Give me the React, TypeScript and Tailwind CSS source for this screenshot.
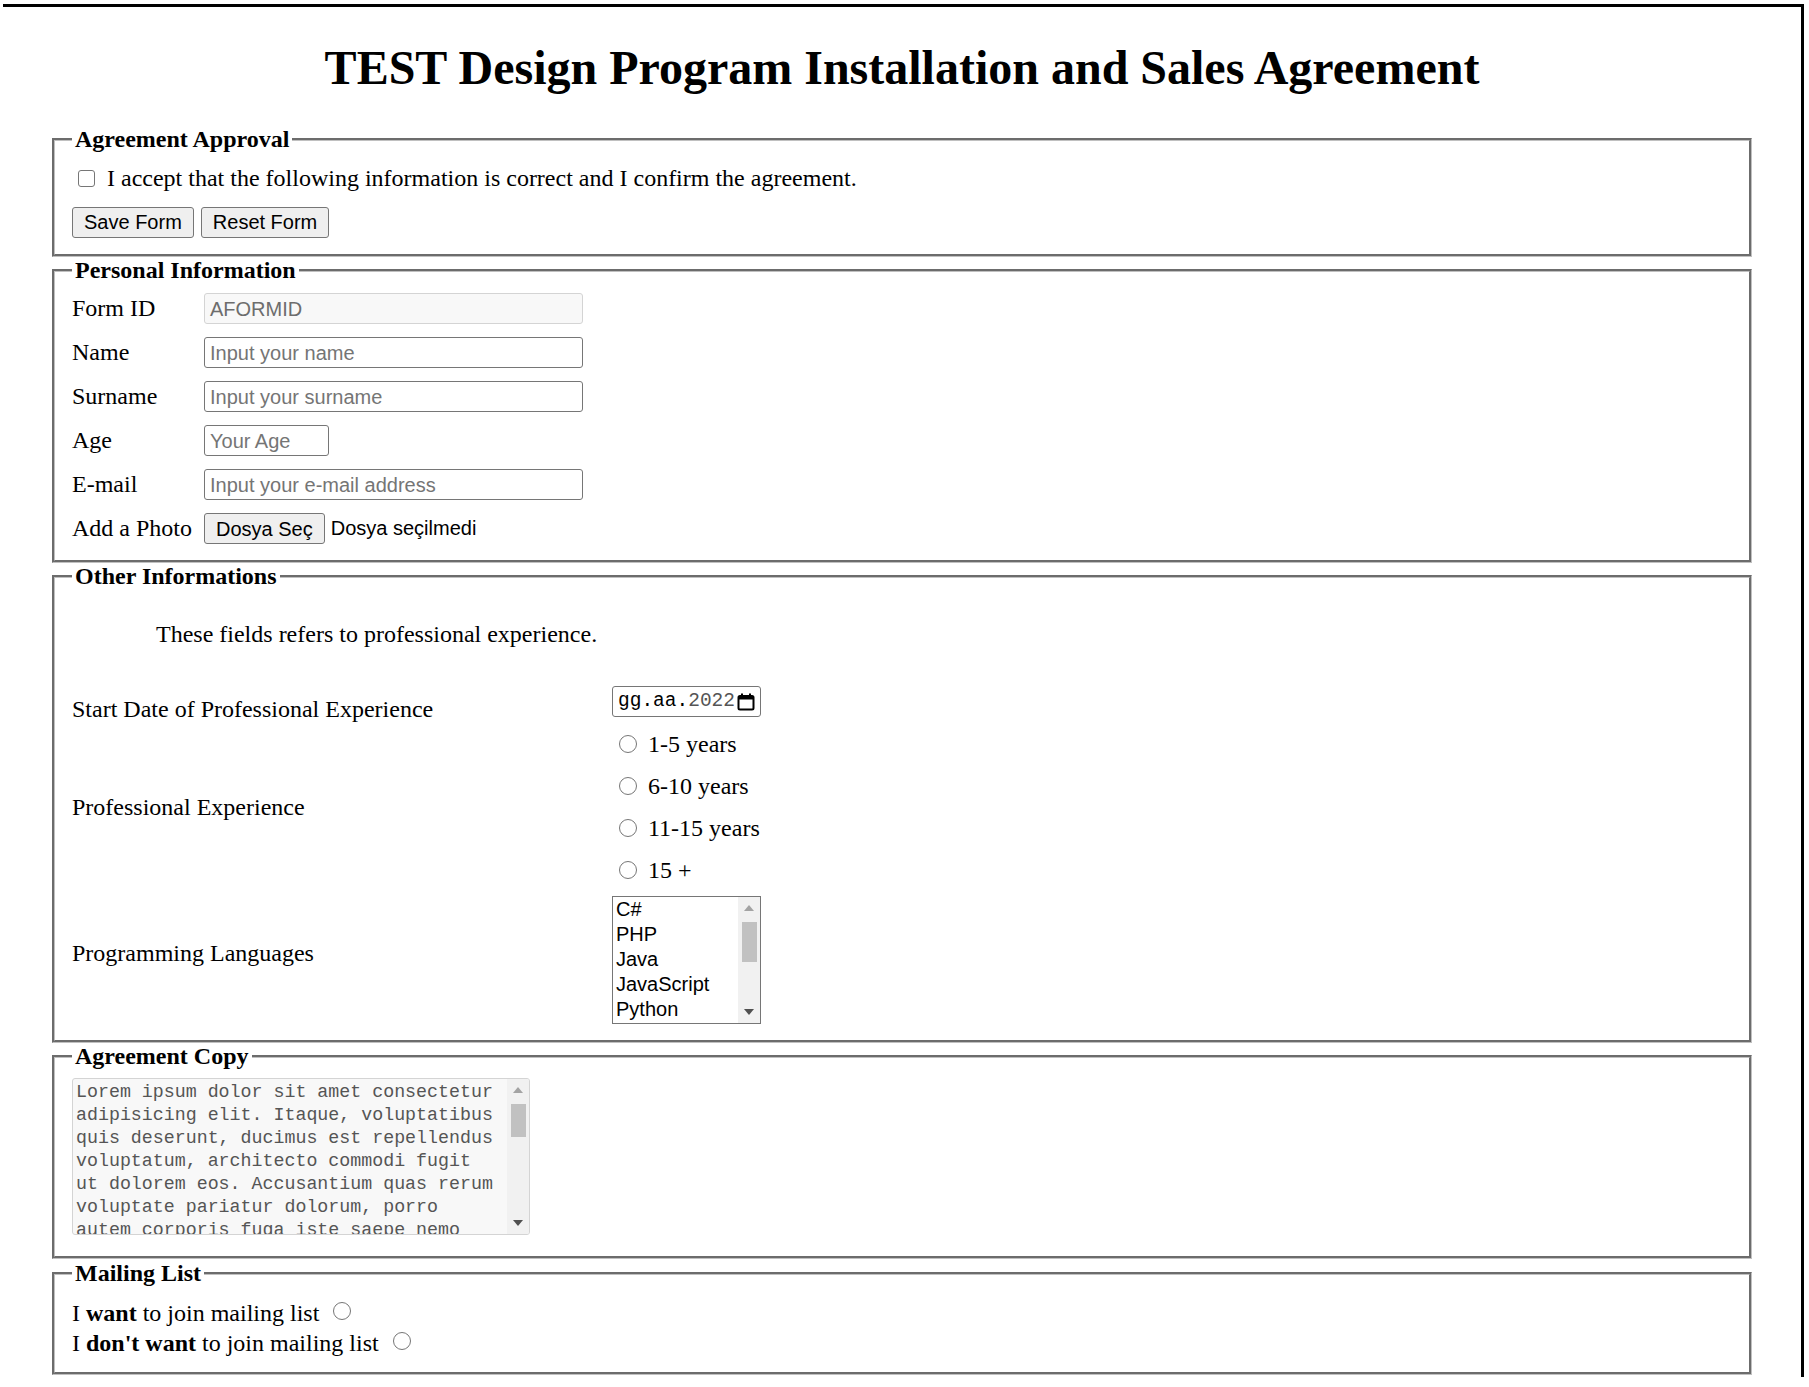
import React from "react";

const fieldsetCls =
  "mx-0 border-[3px] [border-style:groove] border-[#c0c0c0] px-[17px]";

function Checkbox() {
  return (
    <span className="inline-block h-[17px] w-[17px] shrink-0 rounded-[3px] border-[1.5px] border-[#767676] bg-white" />
  );
}

function Radio({ className = "" }: { className?: string }) {
  return (
    <span
      className={
        "inline-block h-[18px] w-[18px] shrink-0 rounded-full border-[1.5px] border-[#767676] bg-white " +
        className
      }
    />
  );
}

function Button({ children }: { children: React.ReactNode }) {
  return (
    <span className="inline-flex h-[31px] items-center rounded-[3px] border-[1.5px] border-[#767676] bg-[#efefef] px-[11px] font-['Liberation_Sans',Arial,sans-serif] text-[20px] leading-none text-black">
      {children}
    </span>
  );
}

function TextInput({
  placeholder,
  value,
  w,
  disabled,
}: {
  placeholder?: string;
  value?: string;
  w: "full" | "age";
  disabled?: boolean;
}) {
  const width = w === "full" ? "w-[379px]" : "w-[125px]";
  const look = disabled
    ? "border-[#d4d4d4] bg-[#f8f8f8] text-[#6d6d6d]"
    : "border-[#767676] bg-white text-[#757575]";
  return (
    <div
      className={
        "flex h-[31px] items-center rounded-[3px] border-[1.5px] px-[5px] font-['Liberation_Sans',Arial,sans-serif] text-[20px] leading-none " +
        width +
        " " +
        look
      }
    >
      {value ?? placeholder}
    </div>
  );
}

function ArrowUp() {
  return (
    <svg width="10" height="6" viewBox="0 0 10 6">
      <path d="M5 0 L10 6 L0 6 Z" fill="#a3a3a3" />
    </svg>
  );
}

function ArrowDown() {
  return (
    <svg width="10" height="6" viewBox="0 0 10 6">
      <path d="M0 0 L10 0 L5 6 Z" fill="#505050" />
    </svg>
  );
}

function Scrollbar({ thumbTop, thumbH }: { thumbTop: number; thumbH: number }) {
  return (
    <div className="flex h-full w-[22px] shrink-0 flex-col bg-[#f1f1f1]">
      <div className="flex h-[22px] items-center justify-center">
        <ArrowUp />
      </div>
      <div className="flex-1">
        <div
          className="mx-auto w-[15px] bg-[#c1c1c1]"
          style={{ marginTop: thumbTop, height: thumbH }}
        />
      </div>
      <div className="flex h-[22px] items-center justify-center">
        <ArrowDown />
      </div>
    </div>
  );
}

function CalendarIcon() {
  return (
    <svg width="18" height="18" viewBox="0 0 18 18">
      <rect x="1.5" y="3" width="15" height="13.5" rx="1.5" fill="none" stroke="#000" strokeWidth="2" />
      <rect x="1.5" y="3" width="15" height="3.5" fill="#000" />
      <rect x="4" y="0.5" width="2" height="3" fill="#000" />
      <rect x="12" y="0.5" width="2" height="3" fill="#000" />
    </svg>
  );
}

const lorem = [
  "Lorem ipsum dolor sit amet consectetur",
  "adipisicing elit. Itaque, voluptatibus",
  "quis deserunt, ducimus est repellendus",
  "voluptatum, architecto commodi fugit",
  "ut dolorem eos. Accusantium quas rerum",
  "voluptate pariatur dolorum, porro",
  "autem corporis fuga iste saepe nemo",
];

export default function App() {
  return (
    <div className="min-h-[1387px] w-[1809px] bg-white">
      <div className="ml-[3px] mt-[4px] h-[1373px] w-[1801px] overflow-hidden border-t-[3px] border-r-[3px] border-black px-[49px] font-['Liberation_Serif','Times_New_Roman',serif] text-[24px] leading-[normal] text-black">
        <h1 className="mb-[32px] mt-[34px] text-center text-[48px] font-bold leading-[53px]">
          TEST Design Program Installation and Sales Agreement
        </h1>

        {/* Agreement Approval */}
        <fieldset className={fieldsetCls + " pb-[16px] pt-[11.5px]"}>
          <legend className="px-[3px] font-bold">Agreement Approval</legend>
          <div className="flex h-[28px] items-center">
            <span className="ml-[6px] mr-[12px] flex">
              <Checkbox />
            </span>
            <span>I accept that the following information is correct and I confirm the agreement.</span>
          </div>
          <div className="mt-[14px] flex gap-[7px]">
            <Button>Save Form</Button>
            <Button>Reset Form</Button>
          </div>
        </fieldset>

        {/* Personal Information */}
        <fieldset className={fieldsetCls + " pb-[9px] pt-[3px]"}>
          <legend className="px-[3px] font-bold">Personal Information</legend>
          <div className="flex flex-col">
            <div className="flex h-[44px] items-center">
              <div className="w-[132px]">Form ID</div>
              <TextInput value="AFORMID" w="full" disabled />
            </div>
            <div className="flex h-[44px] items-center">
              <div className="w-[132px]">Name</div>
              <TextInput placeholder="Input your name" w="full" />
            </div>
            <div className="flex h-[44px] items-center">
              <div className="w-[132px]">Surname</div>
              <TextInput placeholder="Input your surname" w="full" />
            </div>
            <div className="flex h-[44px] items-center">
              <div className="w-[132px]">Age</div>
              <TextInput placeholder="Your Age" w="age" />
            </div>
            <div className="flex h-[44px] items-center">
              <div className="w-[132px]">E-mail</div>
              <TextInput placeholder="Input your e-mail address" w="full" />
            </div>
            <div className="flex h-[44px] items-center">
              <div className="w-[132px]">Add a Photo</div>
              <Button>Dosya Seç</Button>
              <span className="ml-[6px] font-['Liberation_Sans',Arial,sans-serif] text-[20px]">
                Dosya seçilmedi
              </span>
            </div>
          </div>
        </fieldset>

        {/* Other Informations */}
        <fieldset className={fieldsetCls + " pb-[16px] pt-0"}>
          <legend className="px-[3px] font-bold">Other Informations</legend>
          <p className="mb-[38px] mt-[31.5px] pl-[84px]">These fields refers to professional experience.</p>

          <div className="flex items-start">
            <div className="mt-[10px] w-[540px]">Start Date of Professional Experience</div>
            <div className="flex h-[31px] w-[149px] items-center justify-between rounded-[3px] border-[1.5px] border-[#767676] pl-[5px] pr-[5px] font-['Liberation_Mono',monospace] text-[19.5px] leading-none">
              <span>
                <span className="text-black">gg.aa.</span>
                <span className="text-[#555]">2022</span>
              </span>
              <CalendarIcon />
            </div>
          </div>

          <div className="flex items-center">
            <div className="w-[540px]">Professional Experience</div>
            <div className="flex flex-col">
              {["1-5 years", "6-10 years", "11-15 years", "15 +"].map((t) => (
                <div key={t} className="flex h-[42px] items-center">
                  <Radio className="ml-[7px] mr-[11px]" />
                  <span>{t}</span>
                </div>
              ))}
            </div>
          </div>

          <div className="flex items-start">
            <div className="mt-[49px] w-[540px]">Programming Languages</div>
            <div className="mt-[5px] flex h-[128px] w-[149px] overflow-hidden border-[1.5px] border-[#767676] bg-white">
              <div className="flex flex-1 flex-col pl-[3px] pt-[0px] font-['Liberation_Sans',Arial,sans-serif] text-[20px] leading-[25px]">
                <span>C#</span>
                <span>PHP</span>
                <span>Java</span>
                <span>JavaScript</span>
                <span>Python</span>
              </div>
              <Scrollbar thumbTop={3} thumbH={40} />
            </div>
          </div>
        </fieldset>

        {/* Agreement Copy */}
        <fieldset className={fieldsetCls + " mb-[1px] pb-[21px] pt-[8px]"}>
          <legend className="px-[3px] font-bold">Agreement Copy</legend>
          <div className="flex h-[157px] w-[458px] overflow-hidden rounded-[3px] border-[1.5px] border-[#d4d4d4] bg-[#f8f8f8]">
            <div className="flex-1 overflow-hidden whitespace-pre pl-[3px] pt-[2px] font-['Liberation_Mono',monospace] text-[18.3px] leading-[23px] text-[#555]">
              {lorem.map((l) => (
                <div key={l}>{l}</div>
              ))}
            </div>
            <Scrollbar thumbTop={3} thumbH={33} />
          </div>
        </fieldset>

        {/* Mailing List */}
        <fieldset className={fieldsetCls + " pb-[14px] pt-[11px]"}>
          <legend className="px-[3px] font-bold">Mailing List</legend>
          <div className="flex h-[30px] items-center">
            <span>
              I <b>want</b> to join mailing list
            </span>
            <Radio className="ml-[14px] -mt-[4px]" />
          </div>
          <div className="flex h-[30px] items-center">
            <span>
              I <b>don't want</b> to join mailing list
            </span>
            <Radio className="ml-[14px] -mt-[4px]" />
          </div>
        </fieldset>
      </div>
    </div>
  );
}
